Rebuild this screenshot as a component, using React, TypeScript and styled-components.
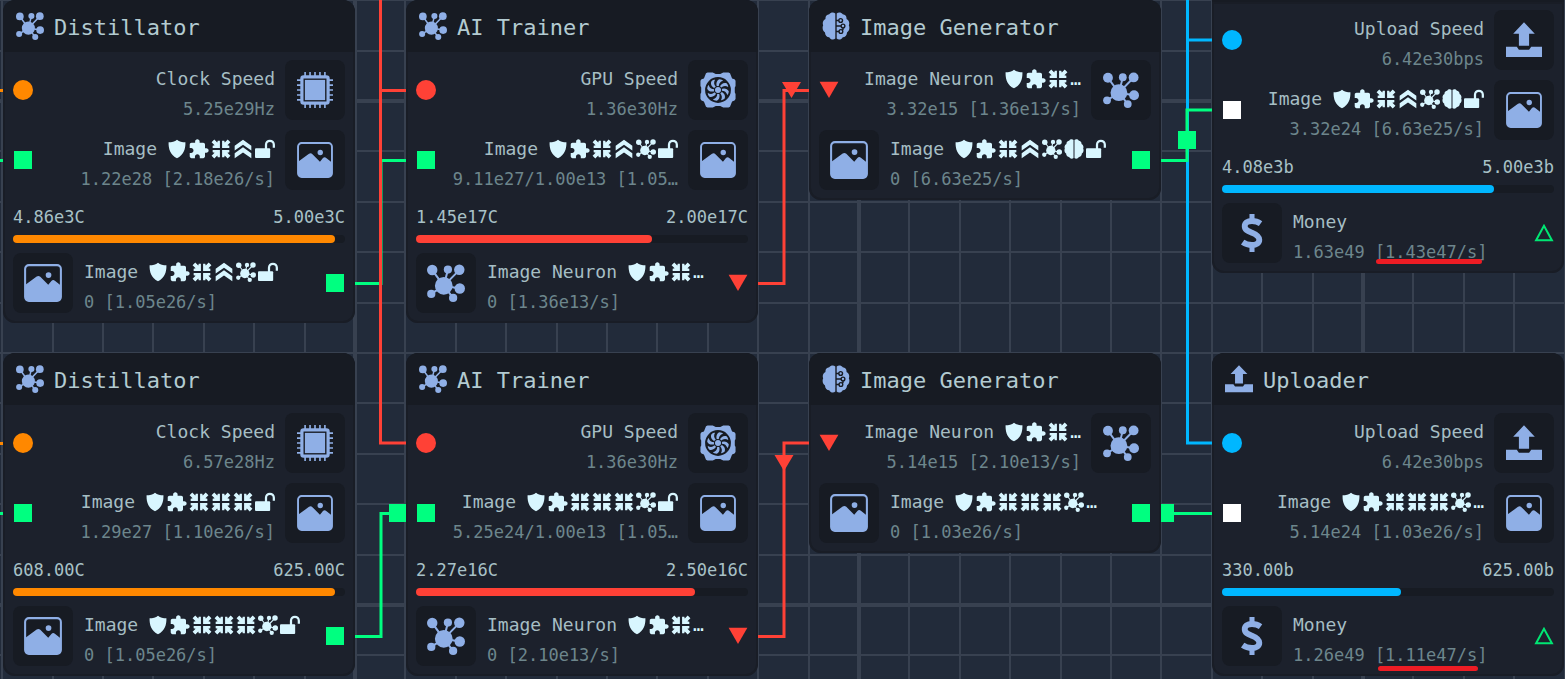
import React from 'react';
import styled, { createGlobalStyle } from 'styled-components';

const color = {
  canvas: '#222b3a',
  gridLine: '#384150',
  card: '#1c212c',
  inset: '#171b23',
  icon: '#8fafe6',
  title: '#b3cbd1',
  name: '#a6bec4',
  value: '#6d868c',
  amount: '#a8c1c7',
  modifier: '#d8f6ff',
  orange: '#ff8800',
  red: '#ff4136',
  green: '#00ff80',
  blue: '#00b7ff',
  white: '#ffffff',
  marker: '#ed1c24',
};

const GlobalStyle = createGlobalStyle`
  body {
    margin: 0;
    background: ${color.canvas};
    font-family: 'DejaVu Sans Mono', monospace;
  }
  h2, p { margin: 0; font-weight: 400; }
`;

/* ---------- layout parts ---------- */

const Canvas = styled.main`
  position: relative;
  width: 100%;
  height: 100vh;
  overflow: hidden;
`;

const Layer = styled.svg`
  position: absolute;
  inset: 0;
  width: 100%;
  height: 100%;
  pointer-events: none;
`;

const Card = styled.section<{ $x: number; $y: number; $open?: boolean }>`
  position: absolute;
  left: ${(p) => p.$x}px;
  top: ${(p) => p.$y}px;
  width: 352px;
  overflow: hidden;
  border-radius: ${(p) => (p.$open ? '0 0 12px 12px' : '12px')};
  border-top: ${(p) => (p.$open ? `2px solid ${color.inset}` : '0')};
  background: ${color.card};
  box-shadow: inset 0 0 0 2px #191d26;
`;

const Header = styled.header`
  display: flex;
  align-items: center;
  gap: 9px;
  height: 52px;
  padding: 0 12px;
  background: ${color.inset};
`;

const Title = styled.h2`
  padding-top: 3px;
  font-size: 22px;
  line-height: 30px;
  color: ${color.title};
`;

const Body = styled.div`
  display: flex;
  flex-direction: column;
  gap: 10px;
  padding: 8px 10px 10px;
`;

const Row = styled.div`
  display: flex;
  align-items: center;
  gap: 10px;
  height: 60px;
`;

const PortSlot = styled.div`
  display: flex;
  flex: none;
  width: 20px;
`;

const IconBox = styled.div`
  display: flex;
  flex: none;
  align-items: center;
  justify-content: center;
  width: 60px;
  height: 60px;
  border-radius: 8px;
  background: ${color.inset};
`;

const Info = styled.div<{ $end?: boolean }>`
  display: flex;
  flex: 1;
  flex-direction: column;
  align-items: ${(p) => (p.$end ? 'flex-end' : 'flex-start')};
  min-width: 0;
  padding: 7px 0 0 1px;
  white-space: nowrap;
`;

const Name = styled.p`
  display: flex;
  align-items: center;
  gap: 10px;
  font-size: 18px;
  line-height: 30px;
  color: ${color.name};
`;

const Value = styled.p`
  font-size: 17px;
  line-height: 30px;
  color: ${color.value};
`;

const Modifiers = styled.span`
  display: flex;
  align-items: center;
  gap: 2px;
  color: ${color.modifier};
`;

const Gauge = styled.div`
  display: flex;
  flex-direction: column;
  gap: 6px;
  padding-top: 5px;
`;

const Amounts = styled.div`
  display: flex;
  justify-content: space-between;
  font-size: 17px;
  line-height: 24px;
  color: ${color.amount};
`;

const Track = styled.div`
  height: 8px;
  border-radius: 4px;
  background: ${color.inset};
`;

const Fill = styled.div<{ $tone: string }>`
  height: 8px;
  border-radius: 4px;
  background: ${(p) => p.$tone};
`;

/* ---------- icons ---------- */

type IconProps = { size: number };

const Svg = ({ size, children }: IconProps & { children: React.ReactNode }) => (
  <svg width={size} height={size} viewBox="0 0 24 24" fill="currentColor" aria-hidden="true">
    {children}
  </svg>
);

const NetworkShape = () => (
  <>
    <path
      d="M10.6 13.8 3.3 3.9M10.6 13.8 13.2 3.7M10.6 13.8 20.5 3.7M10.6 13.8 20.7 15.5M10.6 13.8 16.5 21.4M10.6 13.8 2.6 18.9"
      stroke="currentColor"
      strokeWidth="1.3"
    />
    <circle cx="10.6" cy="13.8" r="5.6" />
    <circle cx="3.3" cy="3.8" r="3.3" />
    <circle cx="13.2" cy="3.5" r="2.6" />
    <circle cx="20.4" cy="3.6" r="3.3" />
    <circle cx="20.7" cy="15.5" r="3.3" />
    <circle cx="16.5" cy="21.4" r="2.6" />
    <circle cx="2.7" cy="18.9" r="2.6" />
  </>
);

const hemisphere =
  'M11.4 1.2C10 0 7.4.1 6.2 2 4 2.1 2.7 4 3 5.9 1 6.8.1 9.3 1 11.3 0 13.6.6 16.4 2.6 17.5 2.5 19.8 4.2 21.6 6.2 21.7 7.3 23.9 10 24.2 11.4 22.8Z';

const iconShapes = {
  network: <NetworkShape />,
  image: (
    <>
      <rect x="0.7" y="0.7" width="22.6" height="22.6" rx="2.4" fill="none" stroke="currentColor" strokeWidth="1.3" />
      <path d="M.7 13.2 8 7.9q1.2-.8 2.3.2l5 5 2-2.4q1.1-1 2.2-.1l3.8 3V21q0 2.3-2.4 2.3H3Q.7 23.3.7 21Z" />
      <circle cx="15.5" cy="7" r="1.8" />
    </>
  ),
  chip: (
    <>
      <path
        d="M5.4 0v24M8.7 0v24M12 0v24M15.3 0v24M18.6 0v24M0 5.4h24M0 8.7h24M0 12h24M0 15.3h24M0 18.6h24"
        stroke="currentColor"
        strokeWidth="1.1"
      />
      <rect x="2.2" y="2.2" width="19.6" height="19.6" rx="2.2" />
      <rect x="4.8" y="4.8" width="14.4" height="14.4" fill="none" stroke={color.inset} strokeWidth="0.9" />
    </>
  ),
  fan: (
    <>
      <path d="M4 .9 5 .3H8.5L10.5 1.4H13.5L15.5 .3H19L20 .9 21.4 4.3 23 4.9 23.7 5.9V9.4L23.2 10.4V13.6L23.7 14.6V18L23 19 21.4 19.6 20 23.1 19 23.7H15.5L13.5 22.6H10.5L8.5 23.7H5L4 23.1 2.6 19.6 1 19 .3 18V14.6L.8 13.6V10.4L.3 9.4V5.9L1 4.9 2.6 4.3Z" />
      <circle cx="12" cy="12" r="8.6" fill={color.inset} />
      {[0, 45, 90, 135, 180, 225, 270, 315].map((a) => (
        <path key={a} transform={`rotate(${a} 12 12)`} d="M11.4 9.9C10.5 8 11 5.6 12.9 4.8 14.2 4.9 15 5.3 15.4 5.8 13.4 6.4 12.4 7.6 12.5 10Z" />
      ))}
      <circle cx="12" cy="12" r="2.7" fill={color.inset} />
      <circle cx="12" cy="12" r="2" />
    </>
  ),
  circuitBrain: (
    <>
      <path d={hemisphere} />
      <path d={hemisphere} transform="translate(24 0) scale(-1 1)" />
      <g fill="none" stroke={color.inset} strokeWidth="1.2">
        <path d="M12 7.3h2.4M12 12h4.3M12 16.7h2.6M18 13.6v1.3l-.8.8" />
        <circle cx="16" cy="7.3" r="1.6" />
        <circle cx="18" cy="12" r="1.6" />
        <circle cx="16.2" cy="16.7" r="1.6" />
      </g>
    </>
  ),
  upload: (
    <>
      <path d="M12 .2 19.2 7.8H15.4V15.8H8.6V7.8H4.8Z" />
      <path d="M0 16.5H7.2L8.6 18.5H15.4L16.8 16.5H24V23.3H0Z" />
    </>
  ),
  dollar: (
    <>
      <path
        d="M17.4 6.1C15.7 4.9 13.8 4.4 12 4.4 9 4.4 7.4 5.8 7.4 7.7 7.4 10.1 9.5 10.8 12 11.8 14.7 12.9 16.6 13.9 16.6 16.3 16.6 18.4 14.8 19.6 12 19.6 9.8 19.6 7.8 19 6.1 17.8"
        fill="none"
        stroke="currentColor"
        strokeWidth="3.7"
      />
      <path d="M10.4 0h3.2v4h-3.2zM10.4 20h3.2v4h-3.2z" />
    </>
  ),
  shield: <path d="M12 .9C9.5 3 5.5 4 1.9 4 1.6 12 4 19.3 12 23.2 20 19.3 22.4 12 22.1 4 18.5 4 14.5 3 12 .9Z" />,
  puzzle: (
    <path
      transform="translate(-1.3 -.8) scale(1.08)"
      d="M20.5 11H19V7c0-1.1-.9-2-2-2h-4V3.5C13 2.12 11.88 1 10.5 1S8 2.12 8 3.5V5H4c-1.1 0-1.99.9-1.99 2v3.8H3.5c1.49 0 2.7 1.21 2.7 2.7s-1.21 2.7-2.7 2.7H2V20c0 1.1.9 2 2 2h3.8v-1.5c0-1.49 1.21-2.7 2.7-2.7s2.7 1.21 2.7 2.7V22H17c1.1 0 2-.9 2-2v-4h1.5c1.38 0 2.5-1.12 2.5-2.5S21.88 11 20.5 11z"
    />
  ),
  compress: (
    <>
      {[0, 90, 180, 270].map((a) => (
        <path key={a} transform={`rotate(${a} 12 12)`} d="M10.7 10.7H2V8.1L4.3 7.5.7 3.9 3.9.7 7.5 4.3 8.1 2H10.7Z" />
      ))}
    </>
  ),
  chevrons: <path d="M12 .8 22 8V13.8L12 6.9 2 13.8V8ZM12 10 22 17.2V23L12 16.1 2 23V17.2Z" />,
  brain: (
    <>
      <path d={hemisphere} />
      <path d={hemisphere} transform="translate(24 0) scale(-1 1)" />
    </>
  ),
  unlock: (
    <>
      <rect x="0" y="11.2" width="18.2" height="11.6" rx="1.2" />
      <path d="M13.2 12V6.8a4.7 4.7 0 0 1 9.4 0V10.5" fill="none" stroke="currentColor" strokeWidth="2.7" />
    </>
  ),
};

type IconName = keyof typeof iconShapes;

const Icon = ({ name, size }: { name: IconName; size: number }) => <Svg size={size}>{iconShapes[name]}</Svg>;

const TileIcon = styled(IconBox)`
  color: ${color.icon};
`;

const HeaderIcon = styled.span`
  display: flex;
  justify-content: center;
  width: 30px;
  color: ${color.icon};
`;

/* ---------- ports ---------- */

type PortShape = 'circle' | 'square' | 'down' | 'up';
type PortSpec = { shape: PortShape; tone: string };

const Port = ({ shape, tone }: PortSpec) => (
  <PortSlot>
    <svg width="20" height="20" viewBox="0 0 20 20" fill={tone} aria-hidden="true">
      {shape === 'circle' && <circle cx="10" cy="10" r="10" />}
      {shape === 'square' && <rect x="1" y="1" width="18" height="18" />}
      {shape === 'down' && <path d="M.6 1.7h18.8L10 18Z" />}
      {shape === 'up' && <path d="M10 2.8 2.1 17.3h15.8Z" fill="none" stroke={tone} strokeWidth="2" />}
    </svg>
  </PortSlot>
);

/* ---------- node data ---------- */

type RowSpec = {
  side: 'in' | 'out';
  port: PortSpec;
  icon: IconName;
  name: string;
  value: string;
  mods?: IconName[];
  more?: boolean;
};

type GaugeSpec = { now: string; max: string; percent: number; tone: string };

type NodeSpec = {
  x: number;
  y: number;
  title?: string;
  icon?: IconName;
  inputs: RowSpec[];
  gauge?: GaugeSpec;
  outputs: RowSpec[];
};

const circle = (tone: string): PortSpec => ({ shape: 'circle', tone });
const square = (tone: string): PortSpec => ({ shape: 'square', tone });
const down: PortSpec = { shape: 'down', tone: color.red };
const up: PortSpec = { shape: 'up', tone: '#00e673' };

const base: IconName[] = ['shield', 'puzzle', 'compress'];
const triple: IconName[] = [...base, 'compress', 'compress'];

const clock = (value: string): RowSpec => ({ side: 'in', port: circle(color.orange), icon: 'chip', name: 'Clock Speed', value });
const gpu: RowSpec = { side: 'in', port: circle(color.red), icon: 'fan', name: 'GPU Speed', value: '1.36e30Hz' };
const uploadSpeed: RowSpec = { side: 'in', port: circle(color.blue), icon: 'upload', name: 'Upload Speed', value: '6.42e30bps' };
const image = (side: 'in' | 'out', value: string, mods: IconName[], more = false, tone = color.green): RowSpec => ({
  side,
  port: square(tone),
  icon: 'image',
  name: 'Image',
  value,
  mods,
  more,
});
const neuron = (side: 'in' | 'out', value: string): RowSpec => ({
  side,
  port: down,
  icon: 'network',
  name: 'Image Neuron',
  value,
  mods: base,
  more: true,
});
const money = (value: string): RowSpec => ({ side: 'out', port: up, icon: 'dollar', name: 'Money', value });

const nodes: NodeSpec[] = [
  {
    x: 3, y: 0, title: 'Distillator', icon: 'network',
    inputs: [clock('5.25e29Hz'), image('in', '1.22e28 [2.18e26/s]', [...base, 'chevrons', 'unlock'])],
    gauge: { now: '4.86e3C', max: '5.00e3C', percent: 97, tone: color.orange },
    outputs: [image('out', '0 [1.05e26/s]', [...base, 'chevrons', 'network', 'unlock'])],
  },
  {
    x: 406, y: 0, title: 'AI Trainer', icon: 'network',
    inputs: [gpu, image('in', '9.11e27/1.00e13 [1.05…', [...base, 'chevrons', 'network', 'unlock'])],
    gauge: { now: '1.45e17C', max: '2.00e17C', percent: 71, tone: color.red },
    outputs: [neuron('out', '0 [1.36e13/s]')],
  },
  {
    x: 809, y: 0, title: 'Image Generator', icon: 'circuitBrain',
    inputs: [neuron('in', '3.32e15 [1.36e13/s]')],
    outputs: [image('out', '0 [6.63e25/s]', [...base, 'chevrons', 'network', 'brain', 'unlock'])],
  },
  {
    x: 1212, y: 0,
    inputs: [
      uploadSpeed,
      image('in', '3.32e24 [6.63e25/s]', [...base, 'chevrons', 'network', 'brain', 'unlock'], false, color.white),
    ],
    gauge: { now: '4.08e3b', max: '5.00e3b', percent: 82, tone: color.blue },
    outputs: [money('1.63e49 [1.43e47/s]')],
  },
  {
    x: 3, y: 353, title: 'Distillator', icon: 'network',
    inputs: [clock('6.57e28Hz'), image('in', '1.29e27 [1.10e26/s]', [...triple, 'unlock'])],
    gauge: { now: '608.00C', max: '625.00C', percent: 97, tone: color.orange },
    outputs: [image('out', '0 [1.05e26/s]', [...triple, 'network', 'unlock'])],
  },
  {
    x: 406, y: 353, title: 'AI Trainer', icon: 'network',
    inputs: [gpu, image('in', '5.25e24/1.00e13 [1.05…', [...triple, 'network', 'unlock'])],
    gauge: { now: '2.27e16C', max: '2.50e16C', percent: 84, tone: color.red },
    outputs: [neuron('out', '0 [2.10e13/s]')],
  },
  {
    x: 809, y: 353, title: 'Image Generator', icon: 'circuitBrain',
    inputs: [neuron('in', '5.14e15 [2.10e13/s]')],
    outputs: [image('out', '0 [1.03e26/s]', [...triple, 'network'], true)],
  },
  {
    x: 1212, y: 353, title: 'Uploader', icon: 'upload',
    inputs: [uploadSpeed, image('in', '5.14e24 [1.03e26/s]', [...triple, 'network'], true, color.white)],
    gauge: { now: '330.00b', max: '625.00b', percent: 54, tone: color.blue },
    outputs: [money('1.26e49 [1.11e47/s]')],
  },
];

/* ---------- composed pieces ---------- */

const ResourceRow = ({ row }: { row: RowSpec }) => {
  const info = (
    <Info $end={row.side === 'in'}>
      <Name>
        {row.name}
        {row.mods && (
          <Modifiers>
            {row.mods.map((m, i) => (
              <Icon key={i} name={m} size={20} />
            ))}
            {row.more && <span>…</span>}
          </Modifiers>
        )}
      </Name>
      <Value>{row.value}</Value>
    </Info>
  );
  const tile = (
    <TileIcon>
      <Icon name={row.icon} size={row.side === 'in' ? 36 : 38} />
    </TileIcon>
  );
  return row.side === 'in' ? (
    <Row>
      <Port {...row.port} />
      {info}
      {tile}
    </Row>
  ) : (
    <Row>
      {tile}
      {info}
      <Port {...row.port} />
    </Row>
  );
};

const NodeCard = ({ node }: { node: NodeSpec }) => (
  <Card $x={node.x} $y={node.y} $open={!node.title}>
    {node.title && node.icon && (
      <Header>
        <HeaderIcon>
          <Icon name={node.icon} size={28} />
        </HeaderIcon>
        <Title>{node.title}</Title>
      </Header>
    )}
    <Body>
      {node.inputs.map((row, i) => (
        <ResourceRow key={i} row={row} />
      ))}
      {node.gauge && (
        <Gauge>
          <Amounts>
            <span>{node.gauge.now}</span>
            <span>{node.gauge.max}</span>
          </Amounts>
          <Track>
            <Fill $tone={node.gauge.tone} style={{ width: `${node.gauge.percent}%` }} />
          </Track>
        </Gauge>
      )}
      {node.outputs.map((row, i) => (
        <ResourceRow key={i} row={row} />
      ))}
    </Body>
  </Card>
);

const Grid = () => (
  <Layer aria-hidden="true">
    <defs>
      <pattern id="grid" x="353" y="99" width="504" height="504" patternUnits="userSpaceOnUse">
        {[1, 2, 3, 4, 5, 6, 7, 8, 9].map((i) => {
          const p = Math.round(i * 50.4) + 1;
          return (
            <g key={i} fill={color.gridLine}>
              <rect x={p} y="0" width="2" height="504" />
              <rect x="0" y={p} width="504" height="2" />
            </g>
          );
        })}
        <rect width="4" height="504" fill={color.gridLine} />
        <rect width="504" height="4" fill={color.gridLine} />
      </pattern>
    </defs>
    <rect width="100%" height="100%" fill="url(#grid)" />
  </Layer>
);

const Links = () => (
  <Layer fill="none" strokeWidth="3" aria-hidden="true">
    <path d="M0 90.5H10M0 443.5H10" stroke={color.orange} />
    <g stroke={color.green}>
      <path d="M0 160.5H10M0 513.5H10" />
      <path d="M350 283.5H381V160.5H410" />
      <path d="M350 636.5H381V513.5H410" />
    </g>
    <path d="M380.5 0V443.5M379 90.5H410M379 443H410" stroke={color.red} />
    <path d="M755 283.5H784V90.5H812M755 636.5H784V443H812" stroke={color.red} />
    <path d="M1187.5 0V443H1216M1187 40H1216" stroke={color.blue} />
    <g stroke={color.green}>
      <path d="M1158 160.5H1187V110H1216" />
      <path d="M1158 513.5H1216" />
    </g>
    <g fill={color.green}>
      <rect x="389" y="504" width="18" height="18" />
      <rect x="1178" y="131" width="18" height="18" />
      <rect x="1156" y="504" width="18" height="18" />
    </g>
    <path d="M782 82H801L791.5 98ZM774.5 455H793.5L784 471Z" fill={color.red} />
  </Layer>
);

const Highlights = () => (
  <Layer fill="none" stroke={color.marker} strokeWidth="5" strokeLinecap="round" aria-hidden="true">
    <path d="M1378.5 261.5H1479.5M1380.5 668.5H1475.5" />
  </Layer>
);

export default function App() {
  return (
    <Canvas>
      <GlobalStyle />
      <Grid />
      <Links />
      {nodes.map((node, i) => (
        <NodeCard key={i} node={node} />
      ))}
      <Highlights />
    </Canvas>
  );
}
